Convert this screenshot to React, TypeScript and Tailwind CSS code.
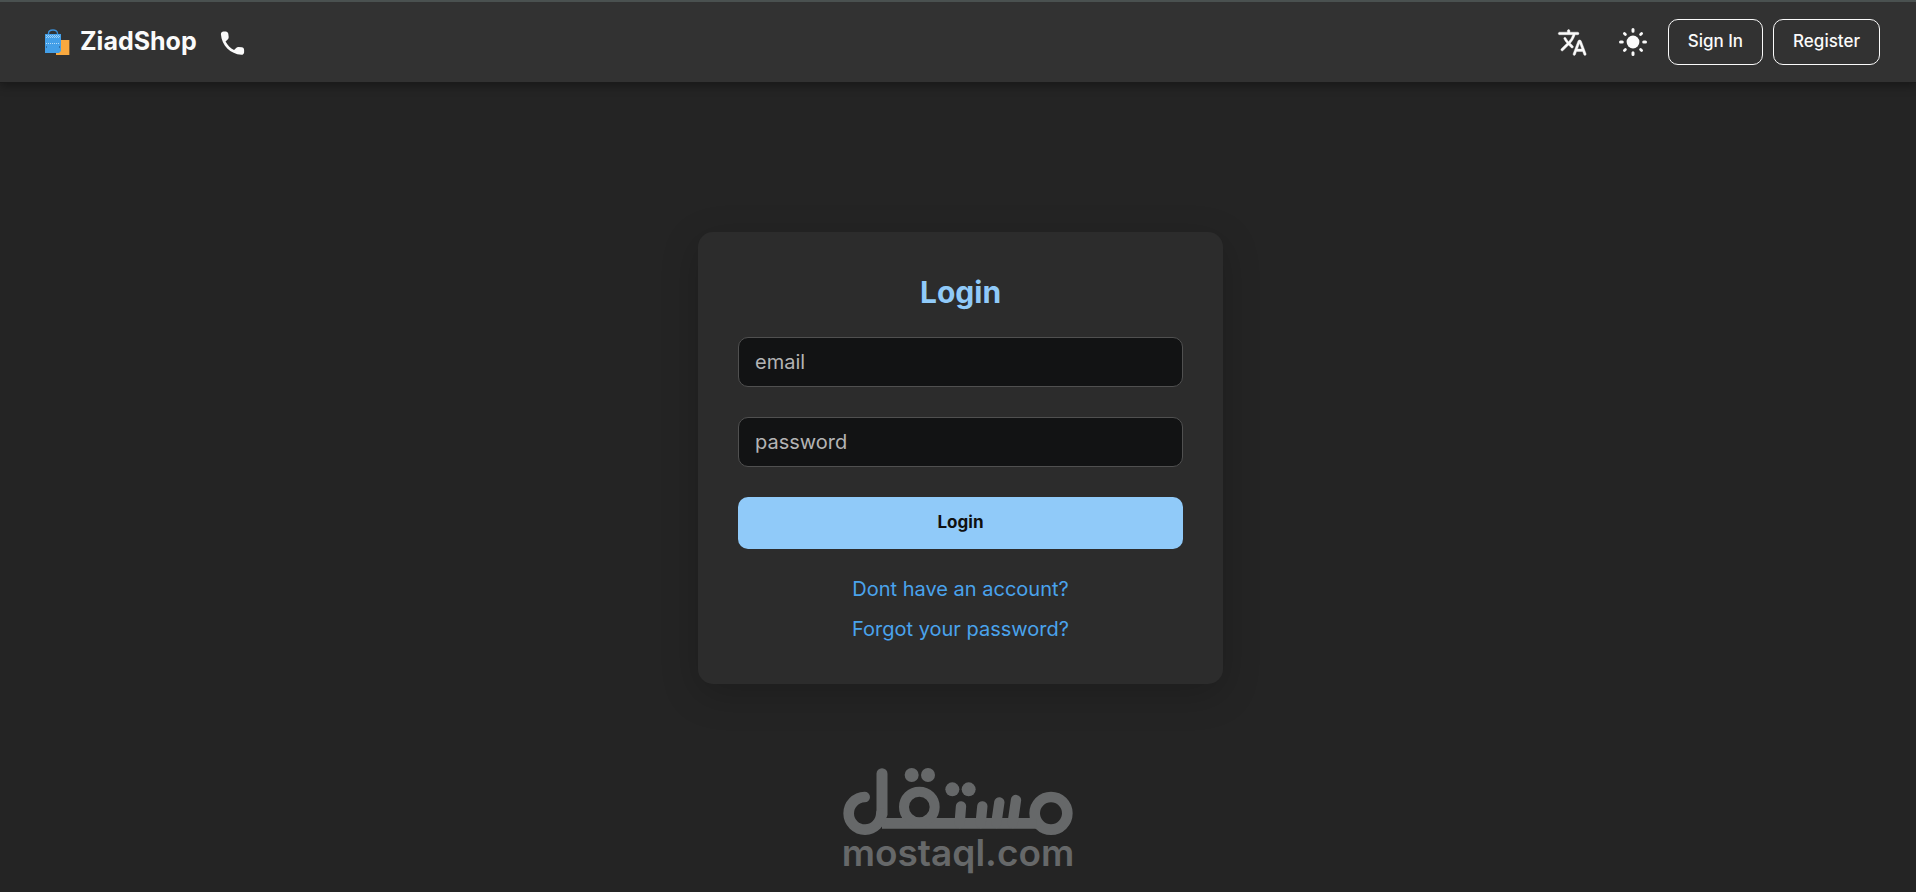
import { useState } from 'react';
import type { FormEvent } from 'react';

const FIELDS = [
  { id: 'email', type: 'email', autoComplete: 'email' },
  { id: 'password', type: 'password', autoComplete: 'current-password' },
];

const LINKS = [
  { href: '#register', label: 'Dont have an account?' },
  { href: '#forgot', label: 'Forgot your password?' },
];

function ShoppingBags() {
  return (
    <svg className="w-[26px] h-[26px] flex-shrink-0" viewBox="0 0 26 26" fill="none" aria-hidden="true">
      <rect x="11" y="11" width="14" height="15" fill="#f9a93f" />
      <path d="M24.5 11v15" stroke="#7a5a33" strokeWidth="1" />
      <path d="M3.5 6V4.5C3.5 2 5.5 1 8 1s4.5 1 4.5 3.5V6" stroke="#3c8fd6" strokeWidth="1.4" />
      <path d="M0 5h16v17l-2 2H0z" fill="#439fe8" />
      <path d="M1 6.5h14M1 8.5h14" stroke="#9fd0f5" strokeWidth="1" strokeDasharray="1 1" />
      <path d="M2 7.5h13" stroke="#9fd0f5" strokeWidth="1" strokeDasharray="1 1" />
      <path d="M1 14.5h14" stroke="#b5dbf8" strokeWidth="1" strokeDasharray="1 1" />
      <path d="M1.5 17v2M14.5 17v2" stroke="#2f6fa8" strokeWidth="1" />
    </svg>
  );
}

function PhoneIcon() {
  return (
    <svg className="w-[31px] h-[31px]" viewBox="0 0 24 24" fill="currentColor" aria-hidden="true">
      <path d="M19.23 15.26l-2.54-.29c-.61-.07-1.21.14-1.64.57l-1.84 1.84c-2.83-1.44-5.15-3.75-6.59-6.59l1.85-1.85c.43-.43.64-1.03.57-1.64l-.29-2.52c-.12-1.01-.97-1.77-1.99-1.77H5.03c-1.13 0-2.07.94-2 2.07.53 8.54 7.36 15.36 15.89 15.89 1.13.07 2.07-.87 2.07-2v-1.73c.01-1.01-.75-1.86-1.76-1.98z" transform="translate(0 .5)" />
    </svg>
  );
}

function TranslateIcon() {
  return (
    <svg className="w-[31px] h-[31px]" viewBox="0 0 24 24" fill="currentColor" stroke="currentColor" strokeWidth=".3" aria-hidden="true">
      <path d="M12.65 15.67c.14-.36.05-.77-.23-1.05l-2.09-2.06.03-.03c1.74-1.94 2.98-4.17 3.71-6.53h1.94c.54 0 .99-.45.99-.99v-.02c0-.54-.45-.99-.99-.99H10V3c0-.55-.45-1-1-1s-1 .45-1 1v1H1.99c-.54 0-.99.45-.99.99 0 .55.45.99.99.99h10.18C11.5 7.92 10.44 9.75 9 11.35c-.81-.89-1.49-1.86-2.06-2.88-.16-.29-.45-.47-.78-.47-.69 0-1.13.75-.79 1.35.63 1.13 1.4 2.21 2.3 3.21L3.3 16.87c-.4.39-.4 1.03 0 1.42.39.39 1.02.39 1.42 0L9 14l2.02 2.02c.51.51 1.38.32 1.63-.35zM17.5 10c-.6 0-1.14.37-1.35.94l-3.67 9.8c-.24.61.22 1.26.87 1.26.39 0 .74-.24.88-.61l.89-2.39h4.75l.9 2.39c.14.36.49.61.88.61.65 0 1.11-.65.88-1.26l-3.67-9.8c-.22-.57-.76-.94-1.36-.94zm-1.62 7l1.62-4.33L19.12 17h-3.24z" />
    </svg>
  );
}

function SunIcon() {
  return (
    <svg className="w-[30px] h-[30px]" viewBox="-15 -15 30 30" fill="none" stroke="currentColor" strokeWidth="3" strokeLinecap="round" aria-hidden="true">
      <circle r="6.4" fill="currentColor" stroke="none" />
      <path d="M0-12.5v1.8M0 12.5v-1.8M-12.5 0h1.8M12.5 0h-1.8" />
      <path d="M-8.6-8.6l1 1M8.6-8.6l-1 1M-8.6 8.6l1-1M8.6 8.6l-1-1" strokeWidth="2.8" />
    </svg>
  );
}

function MostaqlLogo() {
  return (
    <svg className="w-[230px] h-[68px]" viewBox="69 84 690 204" fill="none" stroke="currentColor" strokeWidth="32" strokeLinecap="round" role="img" aria-label="مستقل">
      <circle cx="693" cy="220" r="49" />
      <path d="M186 250h464" strokeLinecap="butt" />
      <circle cx="298" cy="201" r="46" strokeWidth="30" />
      <path d="M423 199l-4 50M487 199l-5 50M538 187l-9 62M588 180l-10 69" strokeWidth="31" />
      <path d="M186 101v122" strokeWidth="33" />
      <path d="M134 171a49 49 0 1 0 50 49" />
      <g fill="currentColor" stroke="none">
        <circle cx="275" cy="105" r="21" />
        <circle cx="324" cy="105" r="21" />
        <circle cx="397" cy="148" r="21" />
        <circle cx="446" cy="148" r="21" />
      </g>
    </svg>
  );
}

function Navbar() {
  return (
    <header className="flex items-center justify-between h-[83px] pl-[45px] pr-9 border-t-2 border-t-[#4a5150] border-b border-b-[#1b1b1b] bg-[#323232] shadow-[0_2px_10px_rgba(0,0,0,0.4)] text-[#fafafa]">
      <div className="flex items-center gap-5">
        <a href="#home" className="flex items-center gap-[9px] text-[25px] font-bold">
          <ShoppingBags />
          ZiadShop
        </a>
        <a href="#contact" aria-label="Contact us">
          <PhoneIcon />
        </a>
      </div>

      <nav className="flex items-center gap-[10px]">
        <button type="button" aria-label="Change language" className="px-[10px]">
          <TranslateIcon />
        </button>
        <button type="button" aria-label="Toggle theme" className="px-[10px]">
          <SunIcon />
        </button>
        <a href="#signin" className="flex items-center h-[46px] px-[19px] border border-[#fafafa] rounded-[10px] text-[17px] font-medium">
          Sign In
        </a>
        <a href="#register" className="flex items-center h-[46px] px-[19px] border border-[#fafafa] rounded-[10px] text-[17px] font-medium">
          Register
        </a>
      </nav>
    </header>
  );
}

export default function App() {
  const [values, setValues] = useState<Record<string, string>>({ email: '', password: '' });

  const handleSubmit = (e: FormEvent) => {
    e.preventDefault();
  };

  return (
    <div className="min-h-screen bg-[#242424] font-['Inter',sans-serif]">
      <Navbar />

      <main className="flex justify-center pt-[149px] pl-[5px]">
        <section className="w-full max-w-[525px] p-10 rounded-[15px] bg-[#2c2c2c] shadow-[0_10px_38px_rgba(0,0,0,0.2)]">
          <h1 className="mb-[25px] text-center text-3xl leading-10 font-bold text-[#90caf9]">Login</h1>

          <form onSubmit={handleSubmit} className="flex flex-col gap-[30px]">
            {FIELDS.map(f => (
              <label key={f.id} htmlFor={f.id} className="block">
                <input
                  id={f.id}
                  type={f.type}
                  placeholder={f.id}
                  aria-label={f.id}
                  autoComplete={f.autoComplete}
                  value={values[f.id]}
                  onChange={e => setValues({ ...values, [f.id]: e.target.value })}
                  className="block w-full h-[50px] px-4 border border-[#505050] rounded-[10px] bg-[#121314] text-xl text-white placeholder:text-[#b4b4b4] outline-none focus:border-[#90caf9]"
                />
              </label>
            ))}
            <button type="submit" className="h-[52px] rounded-[10px] bg-[#90caf9] text-[17px] font-bold text-[#101010]">
              Login
            </button>
          </form>

          <div className="mt-[25px] flex flex-col items-center gap-[10px]">
            {LINKS.map(l => (
              <a key={l.href} href={l.href} className="text-xl leading-[30px] text-[#4aa3ec] hover:underline">
                {l.label}
              </a>
            ))}
          </div>
        </section>
      </main>

      <footer className="flex flex-col items-center pt-[84px] text-[#666869]">
        <MostaqlLogo />
        <p className="text-[37px] leading-[34px] font-semibold">mostaql.com</p>
      </footer>
    </div>
  );
}
